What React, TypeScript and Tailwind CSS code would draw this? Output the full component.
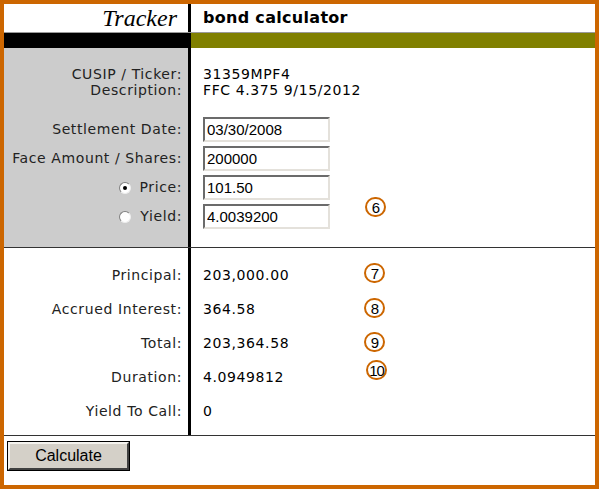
import React, { useState } from "react";

const labelFont = { fontFamily: '"DejaVu Sans", Verdana, sans-serif' };

const Radio: React.FC<{ checked: boolean; onClick: () => void }> = ({ checked, onClick }) => (
  <span
    onClick={onClick}
    className="relative inline-block w-[12px] h-[12px] rounded-full bg-white border border-t-[#808080] border-l-[#808080] border-b-[#eeeeee] border-r-[#eeeeee] mr-[9px]"
  >
    {checked && <span className="absolute left-[3px] top-[3px] w-[4px] h-[4px] rounded-full bg-black" />}
  </span>
);

const Field: React.FC<{ value: string }> = ({ value }) => {
  const [v, setV] = useState(value);
  return (
    <input
      value={v}
      onChange={(e) => setV(e.target.value)}
      className="w-[127px] h-[25px] px-[2px] text-[15px] text-black bg-white outline-none border-2 border-t-[#6b6b6b] border-l-[#6b6b6b] border-b-[#e4e1db] border-r-[#e4e1db] tracking-normal"
      style={{ fontFamily: '"Liberation Sans", Arial, sans-serif' }}
    />
  );
};

const Badge: React.FC<{ n: string; x: number; y: number }> = ({ n, x, y }) => (
  <span
    className="absolute w-[21px] h-[20px] rounded-full border-2 border-[#cc6600] flex items-center justify-center text-[15px] text-black leading-none tracking-[-1px]"
    style={{ left: x - 10, top: y - 10, fontFamily: '"Liberation Sans", Arial, sans-serif' }}
  >
    {n}
  </span>
);

const App: React.FC = () => {
  const [mode, setMode] = useState<"price" | "yield">("price");

  const results = [
    ["Principal:", "203,000.00"],
    ["Accrued Interest:", "364.58"],
    ["Total:", "203,364.58"],
    ["Duration:", "4.0949812"],
    ["Yield To Call:", "0"],
  ];

  return (
    <div className="relative w-[599px] h-[489px] bg-white">
      <div className="w-[599px] h-[489px] border-[4px] border-[#cc6600] flex flex-col text-[14px] tracking-[0.6px] text-[#222]" style={labelFont}>
        {/* Header */}
        <div className="flex h-[28px]">
          <div
            className="w-[184px] text-right pr-[11px] italic text-[24px] leading-[28px] text-black tracking-normal"
            style={{ fontFamily: '"Liberation Serif", "Times New Roman", serif' }}
          >
            Tracker
          </div>
          <div className="flex-1 border-l-[3px] border-black pl-[12px] font-bold text-[16px] tracking-[0.3px] leading-[28px] text-black">
            bond calculator
          </div>
        </div>

        {/* Colour bar */}
        <div className="flex h-[16px] border-t border-[#9a9a9a]">
          <div className="w-[184px] bg-black" />
          <div className="flex-1 border-l-[3px] border-black bg-[#808000]" />
        </div>

        {/* Inputs */}
        <div className="flex h-[200px] border-b border-[#333]">
          <div className="w-[184px] bg-[#cccccc] pt-[18px] pr-[6px] text-right">
            <div className="h-[17px] leading-[17px]">CUSIP / Ticker:</div>
            <div className="h-[17px] leading-[14px]">Description:</div>
            <div className="h-[15px]" />
            <div className="h-[29px] flex items-center justify-end">Settlement Date:</div>
            <div className="h-[29px] flex items-center justify-end">Face Amount / Shares:</div>
            <div className="h-[29px] flex items-center justify-end">
              <Radio checked={mode === "price"} onClick={() => setMode("price")} />
              Price:
            </div>
            <div className="h-[29px] flex items-center justify-end">
              <Radio checked={mode === "yield"} onClick={() => setMode("yield")} />
              Yield:
            </div>
          </div>
          <div className="flex-1 border-l-[3px] border-black pt-[18px] pl-[12px] text-black">
            <div className="h-[17px] leading-[17px]">31359MPF4</div>
            <div className="h-[17px] leading-[14px]">FFC 4.375 9/15/2012</div>
            <div className="h-[15px]" />
            <div className="h-[29px] flex items-center"><Field value="03/30/2008" /></div>
            <div className="h-[29px] flex items-center"><Field value="200000" /></div>
            <div className="h-[29px] flex items-center"><Field value="101.50" /></div>
            <div className="h-[29px] flex items-center"><Field value="4.0039200" /></div>
          </div>
        </div>

        {/* Results */}
        <div className="flex h-[188px] border-b border-[#333]">
          <div className="w-[184px] pt-[10px] pr-[6px] text-right">
            {results.map(([l]) => (
              <div key={l} className="h-[34px] flex items-center justify-end">{l}</div>
            ))}
          </div>
          <div className="flex-1 border-l-[3px] border-black pt-[10px] pl-[12px] text-black">
            {results.map(([l, v]) => (
              <div key={l} className="h-[34px] flex items-center">{v}</div>
            ))}
          </div>
        </div>

        {/* Action */}
        <div className="flex-1 pl-[4px] pt-[6px]">
          <button
            className="w-[121px] h-[28px] bg-[#d4d0c8] text-black text-[16px] tracking-normal border-2 border-t-[#f4f3ef] border-l-[#f4f3ef] border-b-[#404040] border-r-[#404040] outline outline-1 outline-black"
            style={{ fontFamily: '"Liberation Sans", Arial, sans-serif' }}
          >
            Calculate
          </button>
        </div>
      </div>

      {/* Annotation markers */}
      <Badge n="6" x={375} y={207} />
      <Badge n="7" x={374} y={273} />
      <Badge n="8" x={374} y={308} />
      <Badge n="9" x={374} y={342} />
      <Badge n="10" x={376} y={370} />
    </div>
  );
};

export default App;
